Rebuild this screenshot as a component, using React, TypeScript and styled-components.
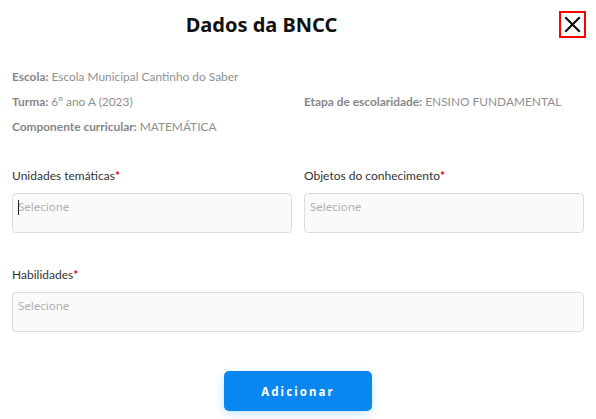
import React from "react";
import styled, { createGlobalStyle } from "styled-components";

const Global = createGlobalStyle`
  html, body { margin: 0; padding: 0; background: #ffffff; }
  * { box-sizing: border-box; }
`;

const Page = styled.div`
  width: 596px;
  height: 419px;
  padding: 0 12px;
  font-family: Lato, "Liberation Sans", sans-serif;
  background: #fff;
  display: flex;
  flex-direction: column;
`;

const Header = styled.header`
  height: 48px;
  display: flex;
  align-items: center;
`;

const Title = styled.h1`
  flex: 1;
  margin: 0;
  padding-right: 48px;
  text-align: center;
  font-family: "Noto Sans", "Open Sans", sans-serif;
  font-weight: 700;
  font-size: 20px;
  color: #111;
`;

const Close = styled.button`
  margin-right: -2px;
  width: 27px;
  height: 27px;
  padding: 0;
  border: 2px solid #f00;
  background: #fff;
  display: flex;
  align-items: center;
  justify-content: center;
  cursor: pointer;
`;

const Info = styled.div`
  margin-top: 16px;
  display: grid;
  grid-template-columns: 1fr 1fr;
  column-gap: 12px;
  grid-auto-rows: 25px;
  align-items: center;
`;

const InfoItem = styled.div<{ $col?: number }>`
  grid-column: ${(p) => p.$col ?? 1};
  font-size: 11.9px;
  color: #8f8f8f;
  white-space: nowrap;
  b { font-weight: 700; color: #878787; }
`;

const Row = styled.div<{ $top: number }>`
  margin-top: ${(p) => p.$top}px;
  display: grid;
  grid-template-columns: 1fr 1fr;
  column-gap: 12px;
`;

const Field = styled.div<{ $span?: boolean }>`
  grid-column: ${(p) => (p.$span ? "1 / -1" : "auto")};
  display: flex;
  flex-direction: column;
  gap: 9px;
`;

const Label = styled.label`
  font-size: 12px;
  line-height: 16px;
  color: #333;
  span { color: #e00; font-weight: 700; }
`;

const BoxWrap = styled.div`
  position: relative;
`;

const Box = styled.textarea`
  display: block;
  width: 100%;
  height: 40px;
  resize: none;
  border: 1px solid #dcdcdc;
  border-radius: 4px;
  background: #fafafa;
  padding: 6px 5px;
  font-family: "Noto Sans", "Open Sans", sans-serif;
  font-size: 11.5px;
  line-height: 14px;
  color: #333;
  outline: none;
  &::placeholder { color: #b0b0b0; }
`;

const Caret = styled.i`
  position: absolute;
  left: 6px;
  top: 7px;
  width: 1px;
  height: 15px;
  background: #222;
`;

const Footer = styled.div`
  margin-top: 39px;
  display: flex;
  justify-content: center;
`;

const Button = styled.button`
  width: 148px;
  height: 40px;
  border: none;
  border-radius: 5px;
  background: #0887f1;
  color: #fff;
  font-family: "Noto Sans", "Open Sans", sans-serif;
  font-weight: 700;
  font-size: 11.5px;
  letter-spacing: 2.1px;
  box-shadow: 0 3px 10px rgba(8, 135, 241, 0.22);
  cursor: pointer;
`;

const XIcon = () => (
  <svg width="17" height="17" viewBox="0 0 17 17">
    <path d="M2 2 L15 15 M15 2 L2 15" stroke="#111" strokeWidth="2.2" strokeLinecap="square" />
  </svg>
);

export default function App() {
  return (
    <>
      <Global />
      <Page>
        <Header>
          <Title>Dados da BNCC</Title>
          <Close aria-label="Fechar">
            <XIcon />
          </Close>
        </Header>
        <Info>
          <InfoItem>
            <b>Escola:</b> Escola Municipal Cantinho do Saber
          </InfoItem>
          <InfoItem>
            <b>Turma:</b> 6º ano A (2023)
          </InfoItem>
          <InfoItem $col={2}>
            <b>Etapa de escolaridade:</b> ENSINO FUNDAMENTAL
          </InfoItem>
          <InfoItem>
            <b>Componente curricular:</b> MATEMÁTICA
          </InfoItem>
        </Info>
        <Row $top={29}>
          <Field>
            <Label>
              Unidades temáticas<span>*</span>
            </Label>
            <BoxWrap>
              <Box placeholder="Selecione" />
              <Caret />
            </BoxWrap>
          </Field>
          <Field>
            <Label>
              Objetos do conhecimento<span>*</span>
            </Label>
            <BoxWrap>
              <Box placeholder="Selecione" />
            </BoxWrap>
          </Field>
        </Row>
        <Row $top={34}>
          <Field $span>
            <Label>
              Habilidades<span>*</span>
            </Label>
            <BoxWrap>
              <Box placeholder="Selecione" />
            </BoxWrap>
          </Field>
        </Row>
        <Footer>
          <Button>Adicionar</Button>
        </Footer>
      </Page>
    </>
  );
}
